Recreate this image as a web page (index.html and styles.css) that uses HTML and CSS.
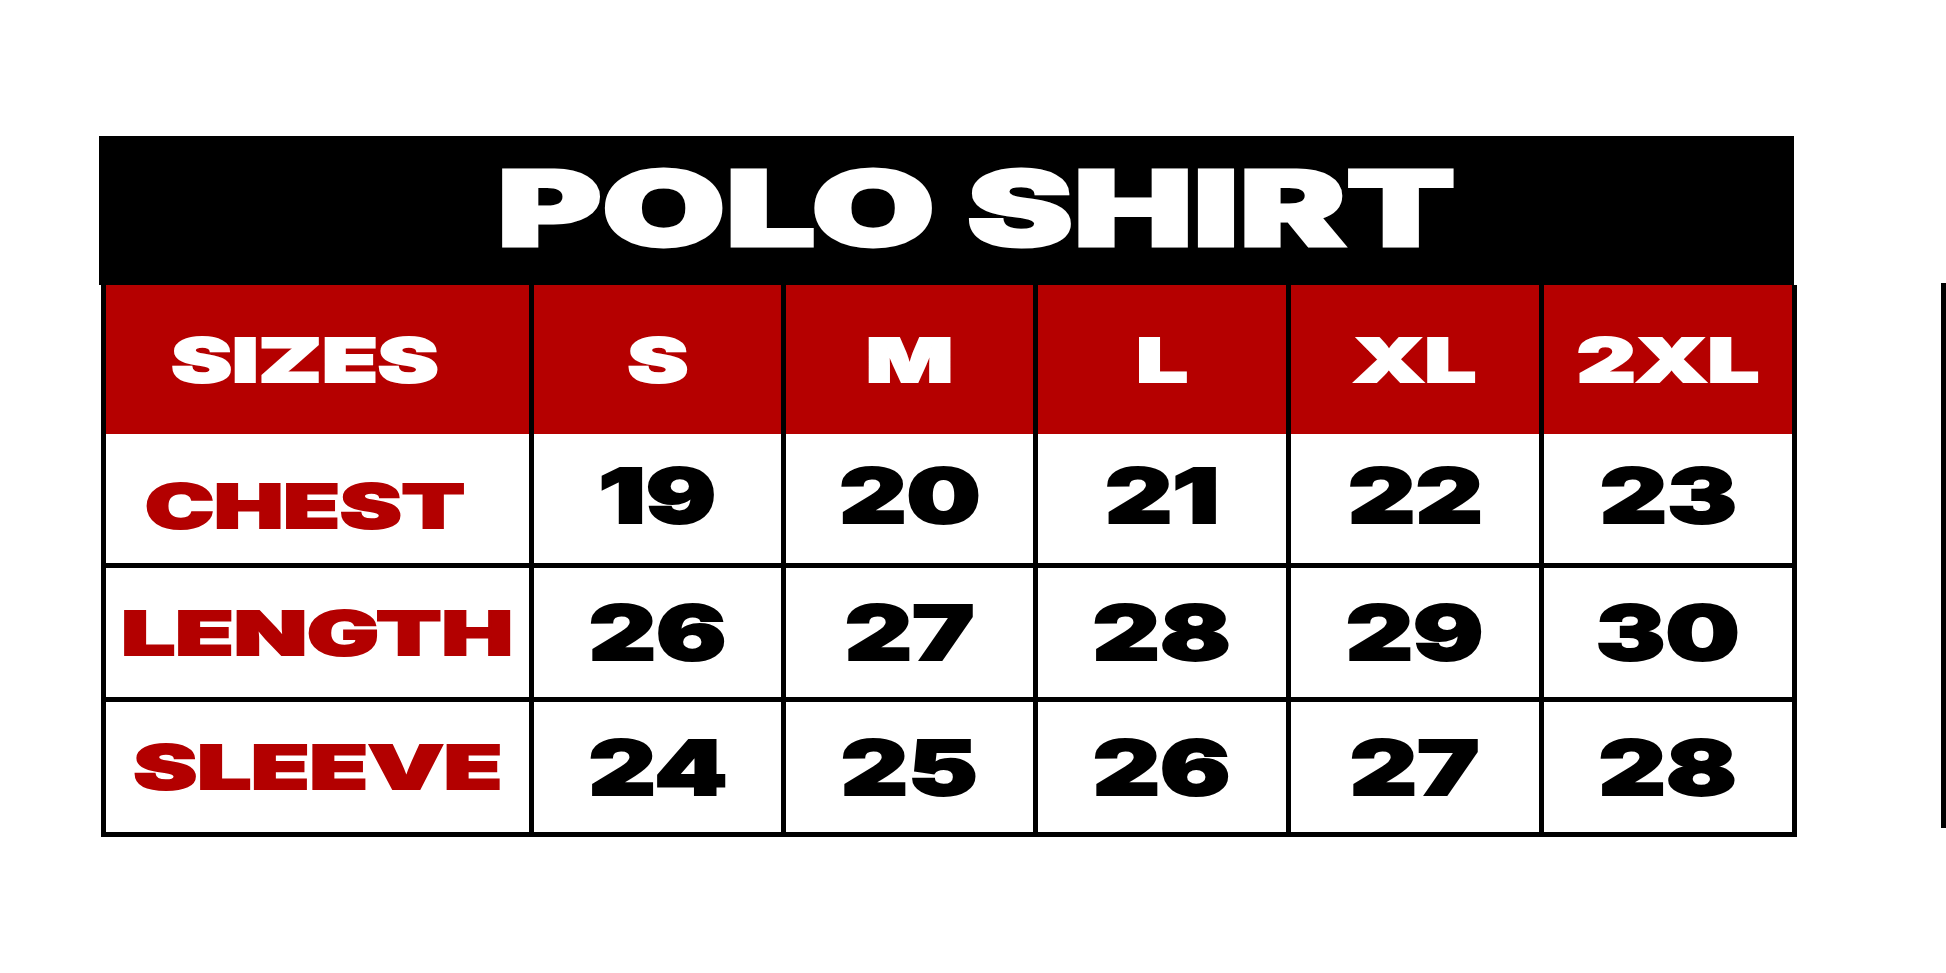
FILE: index.html
```html
<!DOCTYPE html>
<html lang="en">
<head>
<meta charset="utf-8">
<title>Polo Shirt Size Chart</title>
<link rel="stylesheet" href="styles.css">
</head>
<body>
<div class="page">
  <div class="chart">
    <div class="title"><span class="wide">POLO SHIRT</span></div>
    <div class="grid">
      <div class="cell head first"><span class="wide">SIZES</span></div>
      <div class="cell head"><span class="wide">S</span></div>
      <div class="cell head"><span class="wide">M</span></div>
      <div class="cell head"><span class="wide">L</span></div>
      <div class="cell head"><span class="wide">XL</span></div>
      <div class="cell head"><span class="wide">2XL</span></div>

      <div class="cell row label first"><span class="wide">CHEST</span></div>
      <div class="cell row num top"><span class="wide">19</span></div>
      <div class="cell row num top"><span class="wide">20</span></div>
      <div class="cell row num top"><span class="wide">21</span></div>
      <div class="cell row num top"><span class="wide">22</span></div>
      <div class="cell row num top"><span class="wide">23</span></div>

      <div class="cell row label"><span class="wide">LENGTH</span></div>
      <div class="cell row num"><span class="wide">26</span></div>
      <div class="cell row num"><span class="wide">27</span></div>
      <div class="cell row num"><span class="wide">28</span></div>
      <div class="cell row num"><span class="wide">29</span></div>
      <div class="cell row num"><span class="wide">30</span></div>

      <div class="cell row label"><span class="wide">SLEEVE</span></div>
      <div class="cell row num"><span class="wide">24</span></div>
      <div class="cell row num"><span class="wide">25</span></div>
      <div class="cell row num"><span class="wide">26</span></div>
      <div class="cell row num"><span class="wide">27</span></div>
      <div class="cell row num"><span class="wide">28</span></div>
    </div>
  </div>
  <div class="edge"></div>
</div>
</body>
</html>
```
FILE: styles.css
```css
html, body {
  margin: 0;
  padding: 0;
  background: #ffffff;
}

body {
  font-family: "Inter", "Roboto", "Liberation Sans", sans-serif;
  font-weight: 900;
}

.page {
  display: flex;
  align-items: flex-start;
  padding: 136px 0 0 99px;
}

.chart {
  width: 1698px;
  flex-shrink: 0;
}

.title {
  box-sizing: border-box;
  width: 1695px;
  height: 149px;
  background: #000000;
  color: #ffffff;
  display: flex;
  align-items: center;
  justify-content: center;
  padding-left: 60px;
  padding-bottom: 6px;
  font-size: 104px;
  line-height: 1;
  -webkit-text-stroke: 3px #ffffff;
}

.wide {
  display: inline-block;
  white-space: nowrap;
}

.title .wide {
  transform: scaleX(1.535);
}

.grid {
  box-sizing: border-box;
  display: grid;
  grid-template-columns: 428px 252px 252px 253px 253px 253px;
  grid-template-rows: 149px 134px 134px 135px;
  width: 1696px;
  margin-left: 2px;
  border-left: 5px solid #000000;
}

.cell {
  box-sizing: border-box;
  border-right: 5px solid #000000;
  display: flex;
  align-items: center;
  justify-content: center;
  line-height: 1;
}

.head {
  background: #b50000;
  color: #ffffff;
  font-size: 60px;
  -webkit-text-stroke: 2px #ffffff;
}

.head .wide {
  transform: scaleX(1.52);
}

.head.first {
  padding-right: 26px;
}

.row {
  background: #ffffff;
  border-bottom: 5px solid #000000;
}

.label {
  color: #b30000;
  font-size: 60px;
  -webkit-text-stroke: 2px #b30000;
}

.label .wide {
  transform: scaleX(1.59);
}

.label.first {
  padding-top: 14px;
  padding-right: 26px;
}

.label.first .wide {
  transform: scaleX(1.54);
}

.num {
  color: #000000;
  font-size: 75px;
  -webkit-text-stroke: 2px #000000;
}

.num.top {
  padding-bottom: 6px;
}

.num .wide {
  transform: scaleX(1.39);
}

.edge {
  flex-shrink: 0;
  width: 5px;
  height: 545px;
  margin-top: 147px;
  margin-left: 144px;
  background: #000000;
}
```
